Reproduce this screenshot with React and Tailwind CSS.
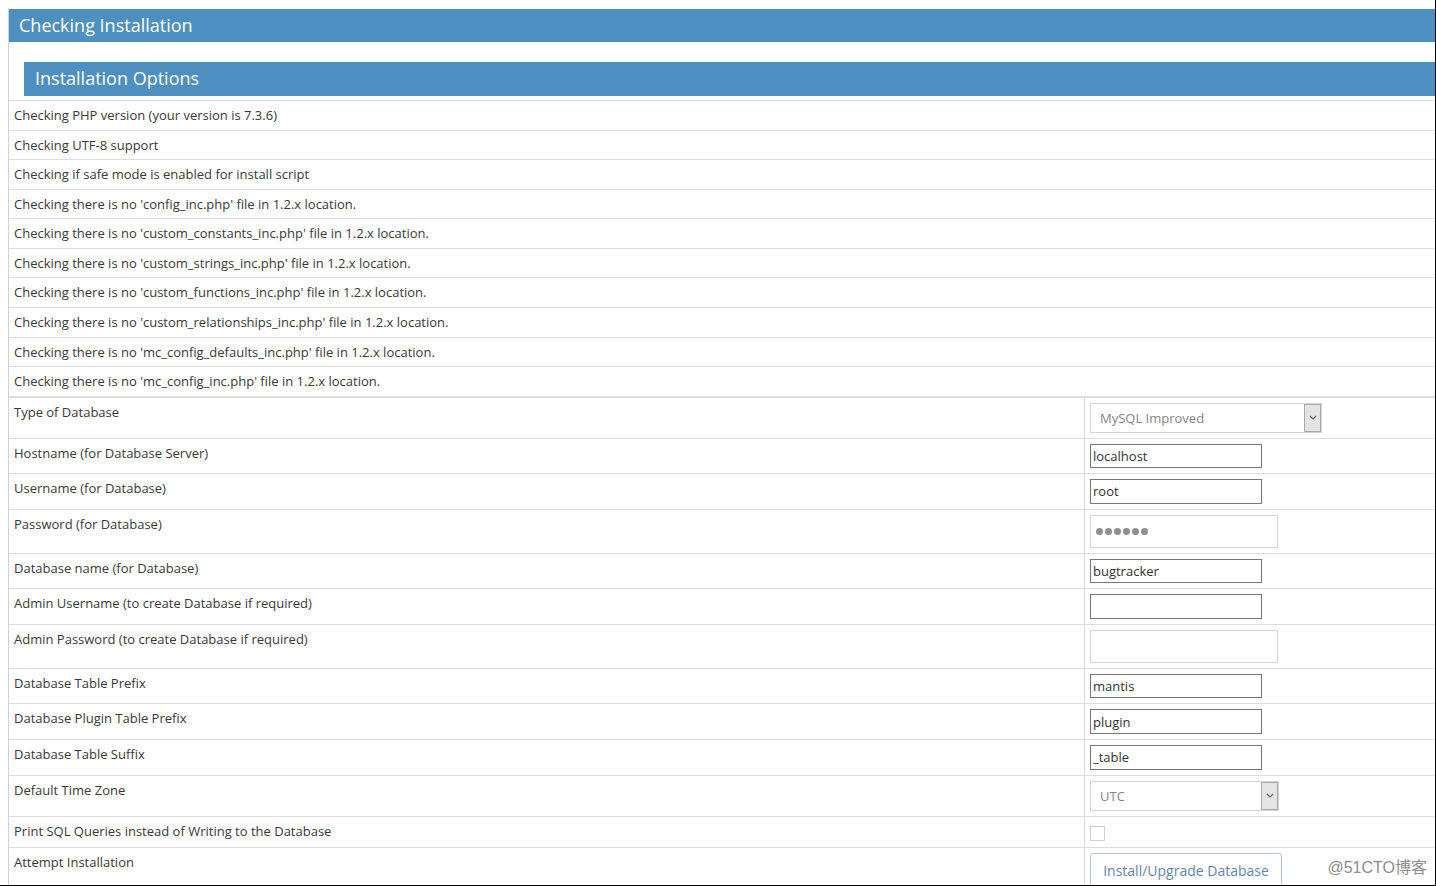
const checks = [
  'Checking PHP version (your version is 7.3.6)',
  'Checking UTF-8 support',
  'Checking if safe mode is enabled for install script',
  "Checking there is no 'config_inc.php' file in 1.2.x location.",
  "Checking there is no 'custom_constants_inc.php' file in 1.2.x location.",
  "Checking there is no 'custom_strings_inc.php' file in 1.2.x location.",
  "Checking there is no 'custom_functions_inc.php' file in 1.2.x location.",
  "Checking there is no 'custom_relationships_inc.php' file in 1.2.x location.",
  "Checking there is no 'mc_config_defaults_inc.php' file in 1.2.x location.",
  "Checking there is no 'mc_config_inc.php' file in 1.2.x location.",
];

function Select({ value, width }) {
  return (
    <div className={`flex h-[30px] border border-[#d5d5d5] bg-white ${width}`}>
      <span className="flex-1 pl-[9px] text-[13px] leading-[28px] text-[#858585]">{value}</span>
      <span className="flex w-[17px] items-center justify-center border border-[#a9a9a9] bg-[#e4e4e4]">
        <svg width="8" height="5" viewBox="0 0 8 5" fill="none" stroke="#666" strokeWidth="1.2">
          <path d="M1 1l3 3 3-3" />
        </svg>
      </span>
    </div>
  );
}

function TextInput({ value = '' }) {
  return (
    <input
      readOnly
      defaultValue={value}
      className="block h-[24.57px] w-[172px] border border-[#767676] px-[2px] text-[13px] text-[#333] outline-none"
    />
  );
}

function WideInput({ dots }) {
  return (
    <div className="flex h-[33px] w-[188px] items-center gap-[2px] border border-[#d5d5d5] bg-white pl-[5px]">
      {dots && [0, 1, 2, 3, 4, 5].map((i) => <span key={i} className="h-[7px] w-[7px] rounded-full bg-[#8f8f8f]" />)}
    </div>
  );
}

function Row({ label, children }) {
  return (
    <div className="flex border-t border-[#dddddd]">
      <div className="w-[1075px] shrink-0 p-[5px] leading-[18.57px]">{label}</div>
      <div className="flex-1 border-l border-[#dddddd] p-[5px]">{children}</div>
    </div>
  );
}

export default function App() {
  return (
    <div
      className="relative h-[886px] w-[1436px] overflow-hidden border-r border-b border-black bg-white pl-[8px] pt-[9px] text-[13px] text-[#393939]"
      style={{ fontFamily: '"Open Sans", "Noto Sans", sans-serif' }}
    >
      <div className="border-l border-[#c9d3dc]">
        <div className="h-[33px] bg-[#4e8fc1] pl-[10px] text-[18px] leading-[33px] text-white">Checking Installation</div>

        <div className="pt-[20px]">
          <div className="ml-[15px] h-[34px] bg-[#4e8fc1] pl-[11px] text-[18px] leading-[33px] text-white">Installation Options</div>

          <div className="mt-[4px]">
            {checks.map((c) => (
              <div key={c} className="border-t border-[#dddddd] p-[5px] leading-[18.57px]">{c}</div>
            ))}
          </div>

          <div className="border-t border-[#dddddd]">
            <Row label="Type of Database"><Select value="MySQL Improved" width="w-[232px]" /></Row>
            <Row label="Hostname (for Database Server)"><TextInput value="localhost" /></Row>
            <Row label="Username (for Database)"><TextInput value="root" /></Row>
            <Row label="Password (for Database)"><WideInput dots /></Row>
            <Row label="Database name (for Database)"><TextInput value="bugtracker" /></Row>
            <Row label="Admin Username (to create Database if required)"><TextInput /></Row>
            <Row label="Admin Password (to create Database if required)"><WideInput /></Row>
            <Row label="Database Table Prefix"><TextInput value="mantis" /></Row>
            <Row label="Database Plugin Table Prefix"><TextInput value="plugin" /></Row>
            <Row label="Database Table Suffix"><TextInput value="_table" /></Row>
            <Row label="Default Time Zone"><Select value="UTC" width="w-[189px]" /></Row>
            <Row label="Print SQL Queries instead of Writing to the Database">
              <div className="h-[20px] pt-[4px]">
                <div className="h-[15px] w-[15px] border border-[#cfcfcf] bg-white" />
              </div>
            </Row>
            <Row label="Attempt Installation">
              <button className="h-[36px] w-[192px] rounded-[3px] border border-[#b3c7d9] bg-white pb-[1px] text-[14px] text-[#6586a8]">
                Install/Upgrade Database
              </button>
            </Row>
          </div>
        </div>
      </div>

      <div
        className="absolute bottom-[5px] right-[8px] text-[16px] text-[#8d8d8d]"
        style={{ fontFamily: '"Liberation Sans", "Noto Sans CJK SC", sans-serif' }}
      >
        @51CTO博客
      </div>
    </div>
  );
}
